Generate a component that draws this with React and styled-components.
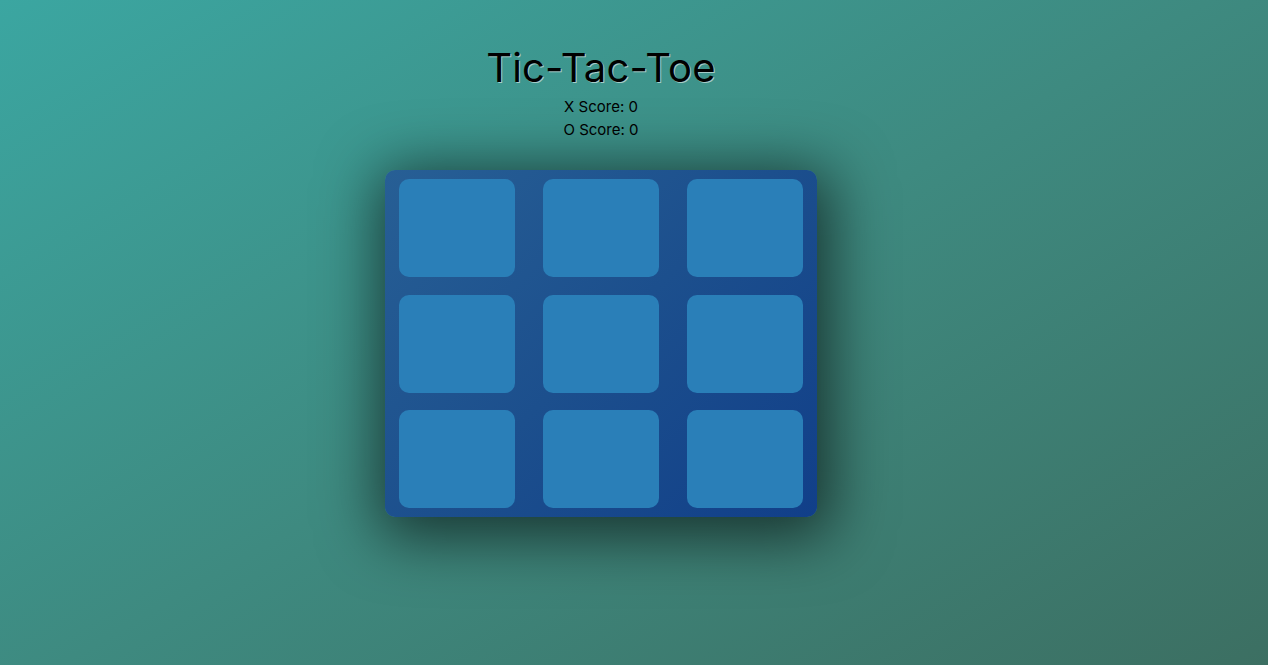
import React, { useState } from "react";
import styled, { createGlobalStyle } from "styled-components";

const GlobalStyle = createGlobalStyle`
  html, body {
    margin: 0;
    padding: 0;
    height: 100%;
  }
  body {
    font-family: "Inter", "Noto Sans", sans-serif;
    background: linear-gradient(150deg, #3ba6a1 0%, #3e8a80 50%, #3c6f62 100%);
    min-height: 665px;
  }
`;

const Page = styled.main`
  display: flex;
  flex-direction: column;
  align-items: center;
  box-sizing: border-box;
  min-height: 665px;
  padding: 44px 66px 0 0;
  color: #000;
`;

const Title = styled.h1`
  margin: 0;
  font-size: 40px;
  font-weight: 400;
  line-height: 48px;
  letter-spacing: 0.2px;
  text-shadow: 1px 1px 0 rgba(255, 255, 255, 0.55);
`;

const Scores = styled.div`
  margin-top: 3px;
  display: flex;
  flex-direction: column;
  align-items: center;
`;

const ScoreLine = styled.p`
  margin: 0;
  font-size: 15px;
  line-height: 23px;
`;

const Board = styled.div`
  margin-top: 29px;
  width: 432px;
  box-sizing: border-box;
  padding: 9px 14px;
  display: grid;
  grid-template-columns: repeat(3, 116px);
  grid-template-rows: 98px 98px 98px;
  row-gap: 17.5px;
  column-gap: 28px;
  border-radius: 10px;
  background: linear-gradient(135deg, #275f95 0%, #1c4f8d 50%, #113f89 100%);
  box-shadow: 4px 10px 60px 10px rgba(0, 0, 0, 0.6);
`;

const Cell = styled.button`
  border: none;
  padding: 0;
  border-radius: 10px;
  background: #2a7fb8;
  font-family: inherit;
  font-size: 56px;
  color: #fff;
  cursor: pointer;
`;

export default function App() {
  const [cells] = useState(Array(9).fill(""));
  return (
    <>
      <GlobalStyle />
      <Page>
        <Title>Tic-Tac-Toe</Title>
        <Scores>
          <ScoreLine>X Score: 0</ScoreLine>
          <ScoreLine>O Score: 0</ScoreLine>
        </Scores>
        <Board>
          {cells.map((c, i) => (
            <Cell key={i}>{c}</Cell>
          ))}
        </Board>
      </Page>
    </>
  );
}
